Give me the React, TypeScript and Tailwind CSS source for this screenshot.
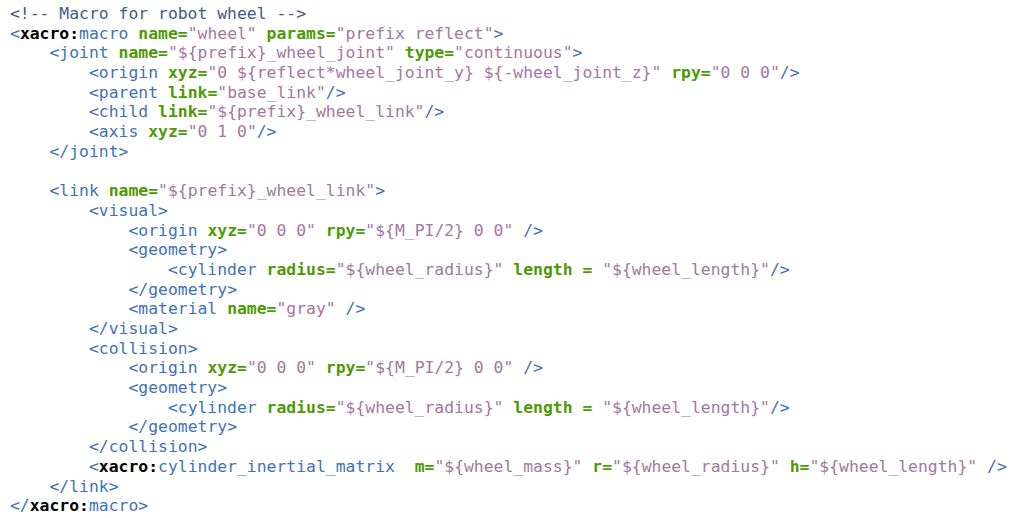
import React from 'react'

const source = [
  '<!-- Macro for robot wheel -->',
  '<xacro:macro name="wheel" params="prefix reflect">',
  '    <joint name="${prefix}_wheel_joint" type="continuous">',
  '        <origin xyz="0 ${reflect*wheel_joint_y} ${-wheel_joint_z}" rpy="0 0 0"/>',
  '        <parent link="base_link"/>',
  '        <child link="${prefix}_wheel_link"/>',
  '        <axis xyz="0 1 0"/>',
  '    </joint>',
  '',
  '    <link name="${prefix}_wheel_link">',
  '        <visual>',
  '            <origin xyz="0 0 0" rpy="${M_PI/2} 0 0" />',
  '            <geometry>',
  '                <cylinder radius="${wheel_radius}" length = "${wheel_length}"/>',
  '            </geometry>',
  '            <material name="gray" />',
  '        </visual>',
  '        <collision>',
  '            <origin xyz="0 0 0" rpy="${M_PI/2} 0 0" />',
  '            <geometry>',
  '                <cylinder radius="${wheel_radius}" length = "${wheel_length}"/>',
  '            </geometry>',
  '        </collision>',
  '        <xacro:cylinder_inertial_matrix  m="${wheel_mass}" r="${wheel_radius}" h="${wheel_length}" />',
  '    </link>',
  '</xacro:macro>',
]

type Tok = { text: string; kind: 'plain' | 'tag' | 'ns' | 'attr' | 'value' | 'comment' }

const colors: Record<Tok['kind'], string> = {
  plain: 'text-[#3c6eb4]',
  tag: 'text-[#3f72b8]',
  ns: 'text-black font-bold',
  attr: 'text-[#4e9a06] font-bold',
  value: 'text-[#a3779f]',
  comment: 'text-[#3e5b86]',
}

function tokenize(line: string): Tok[] {
  if (line.trim().startsWith('<!--')) return [{ text: line, kind: 'comment' }]
  const out: Tok[] = []
  const re = /(\s+)|(<\/?)([\w:]+)|(\w+\s*=)|("[^"]*")|(\/?>)/g
  let m: RegExpExecArray | null
  while ((m = re.exec(line))) {
    if (m[1]) out.push({ text: m[1], kind: 'plain' })
    else if (m[2]) {
      out.push({ text: m[2], kind: 'tag' })
      const name = m[3]
      if (name.startsWith('xacro:')) {
        out.push({ text: 'xacro:', kind: 'ns' })
        out.push({ text: name.slice(6), kind: 'tag' })
      } else out.push({ text: name, kind: 'tag' })
    } else if (m[4]) out.push({ text: m[4], kind: 'attr' })
    else if (m[5]) out.push({ text: m[5], kind: 'value' })
    else if (m[6]) out.push({ text: m[6], kind: 'tag' })
  }
  return out
}

export default function App() {
  return (
    <div className="w-[1031px] h-[518px] bg-white overflow-hidden pt-[4px] pl-[10px]">
      <pre className="font-['DejaVu_Sans_Mono',monospace] text-[16.4px] leading-[19.7px] whitespace-pre">
        {source.map((line, i) => (
          <div key={i} className="h-[19.7px]">
            {tokenize(line).map((t, j) => (
              <span key={j} className={colors[t.kind]}>
                {t.text}
              </span>
            ))}
          </div>
        ))}
      </pre>
    </div>
  )
}
